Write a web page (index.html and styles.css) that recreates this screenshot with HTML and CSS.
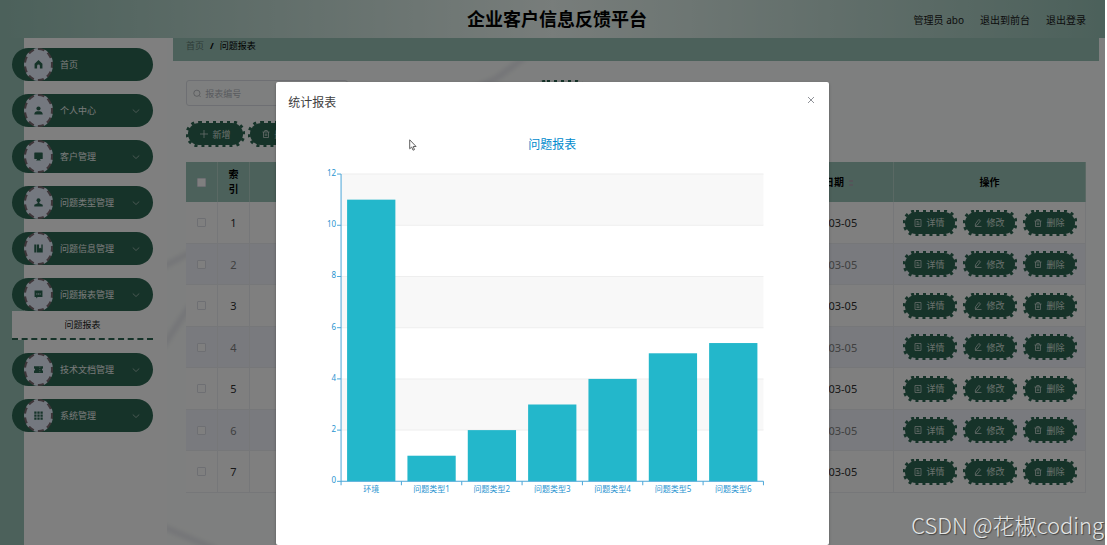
FILE: index.html
```html
<!DOCTYPE html>
<html lang="zh-CN">
<head>
<meta charset="utf-8">
<title>企业客户信息反馈平台</title>
<link rel="stylesheet" href="styles.css">
</head>
<body>
<svg class="sprite" aria-hidden="true">
  <symbol id="i-home" viewBox="0 0 16 16"><path d="M8 0 1 6.500V15h4.500v-4.500a2.500 2.500 0 0 1 5 0V15H15V6.500z"/></symbol>
  <symbol id="i-user" viewBox="0 0 16 16"><circle cx="8" cy="4.500" r="3.700"/><path d="M0.500 15c0-4 3-5.500 5-5.500h5c2 0 5 1.500 5 5.500z"/></symbol>
  <symbol id="i-screen" viewBox="0 0 16 16"><path d="M1.500 1h13a1 1 0 0 1 1 1v9.500a1 1 0 0 1-1 1H11V14h1v1.200H4V14h1v-1.500H1.500a1 1 0 0 1-1-1V2a1 1 0 0 1 1-1z"/></symbol>
  <symbol id="i-person" viewBox="0 0 16 16"><circle cx="8" cy="4" r="3.500"/><path d="M6.500 7h3v2.500l6 2.500v3H.5v-3l6-2.500z"/></symbol>
  <symbol id="i-book" viewBox="0 0 16 16"><path fill-rule="evenodd" d="M.5 1H4v14H.5zM5 1h4v7l2-1.500L13 8V1h2.500v14H5z"/></symbol>
  <symbol id="i-chat" viewBox="0 0 16 16"><path fill-rule="evenodd" d="M1 1h14v11.500H6.500L4 15v-2.500H1zM4 6v2h2V6zm3 0v2h2V6zm3 0v2h2V6z"/></symbol>
  <symbol id="i-ticket" viewBox="0 0 16 16"><path fill-rule="evenodd" d="M0 2h16v4a2 2 0 0 0 0 4v4H0v-4a2 2 0 0 0 0-4zM10 3v2h1V3zm0 4v2h1V7zm0 4v2h1v-2z"/></symbol>
  <symbol id="i-grid" viewBox="0 0 16 16"><path d="M.5 1h4v4h-4zM6 1h4v4H6zM11.500 1h4v4h-4zM.5 6.200h4v4h-4zM6 6.200h4v4H6zM11.500 6.200h4v4h-4zM.5 11.400h4v4h-4zM6 11.400h4v4H6zM11.500 11.400h4v4h-4z"/></symbol>
  <symbol id="i-down" viewBox="0 0 16 16"><path class="line" d="m1.500 5 6.500 6 6.500-6"/></symbol>
  <symbol id="i-search" viewBox="0 0 16 16"><circle class="line" cx="7.500" cy="7.500" r="6"/><path class="line" d="m12 12 3 3"/></symbol>
  <symbol id="i-plus" viewBox="0 0 16 16"><path class="line" d="M8 0v16M0 8h16"/></symbol>
  <symbol id="i-doc" viewBox="0 0 16 16"><path class="line" d="M2 1h12v14H2zM5 5h4M5 8h6M5 11h6"/></symbol>
  <symbol id="i-edit" viewBox="0 0 16 16"><path class="line" d="M3 9.500 9.500 1 13 3.500 6.500 12l-4 1.500zM2 15h13"/></symbol>
  <symbol id="i-trash" viewBox="0 0 16 16"><path class="line" d="M1 4h14M5.500 4V1h5v3M3 4v11h10V4M6.500 7v5M9.500 7v5"/></symbol>
</svg>

<div class="app">
  <header class="topbar">
    <h1 class="brand">企业客户信息反馈平台</h1>
    <nav class="account">
      <span>管理员 abo</span>
      <a href="#">退出到前台</a>
      <a href="#">退出登录</a>
    </nav>
  </header>

  <div class="layout">
    <aside class="sidebar">
      <nav class="menu">
        <a class="item" href="#"><span class="badge"><svg><use href="#i-home"/></svg></span><span class="name">首页</span></a>
        <a class="item" href="#"><span class="badge"><svg><use href="#i-user"/></svg></span><span class="name">个人中心</span><svg class="chev"><use href="#i-down"/></svg></a>
        <a class="item" href="#"><span class="badge"><svg><use href="#i-screen"/></svg></span><span class="name">客户管理</span><svg class="chev"><use href="#i-down"/></svg></a>
        <a class="item" href="#"><span class="badge"><svg><use href="#i-person"/></svg></span><span class="name">问题类型管理</span><svg class="chev"><use href="#i-down"/></svg></a>
        <a class="item" href="#"><span class="badge"><svg><use href="#i-book"/></svg></span><span class="name">问题信息管理</span><svg class="chev"><use href="#i-down"/></svg></a>
        <div class="group">
          <a class="item" href="#"><span class="badge"><svg><use href="#i-chat"/></svg></span><span class="name">问题报表管理</span><svg class="chev"><use href="#i-down"/></svg></a>
          <a class="subitem" href="#">问题报表</a>
        </div>
        <a class="item" href="#"><span class="badge"><svg><use href="#i-ticket"/></svg></span><span class="name">技术文档管理</span><svg class="chev"><use href="#i-down"/></svg></a>
        <a class="item" href="#"><span class="badge"><svg><use href="#i-grid"/></svg></span><span class="name">系统管理</span><svg class="chev"><use href="#i-down"/></svg></a>
      </nav>
    </aside>

    <main class="main">
      <svg class="marble" viewBox="0 0 938 507" preserveAspectRatio="none" aria-hidden="true">
        <path d="M-10 232 70 190 200 100 330 40 390-5"/>
        <path d="M-5 310 20 272 110 180"/>
        <path d="M-10 486 50 512"/>
      </svg>
      <div class="crumbs"><a href="#">首页</a><b>/</b><span>问题报表</span></div>
      <div class="content">
        <form class="search">
          <label class="field"><svg><use href="#i-search"/></svg><input type="text" placeholder="报表编号" aria-label="报表编号"></label>
          <button class="btn" type="button" aria-label="查询"><svg><use href="#i-search"/></svg></button>
        </form>
        <div class="tools">
          <button class="btn" type="button"><svg><use href="#i-plus"/></svg>新增</button>
          <button class="btn" type="button"><svg><use href="#i-trash"/></svg>删除</button>
        </div>
        <table class="grid">
          <colgroup><col class="c-check"><col class="c-index"><col><col class="c-date"><col class="c-act"></colgroup>
          <thead>
            <tr><th><input type="checkbox" aria-label="全选"></th><th>索引</th><th></th><th>登记日期<span class="sort"></span></th><th>操作</th></tr>
          </thead>
          <tbody id="rows"></tbody>
        </table>
      </div>
    </main>
  </div>

  <div class="mask">
    <section class="dialog" role="dialog" aria-label="统计报表">
      <header class="dialog-head">
        <h2>统计报表</h2>
        <button class="close" type="button" aria-label="关闭"><svg viewBox="0 0 8 8"><path d="m1 1 6 6M7 1 1 7"/></svg></button>
      </header>
      <svg class="chart" viewBox="0 0 552 400" role="img" aria-label="问题报表柱状图">
        <text class="chart-title" x="276" y="27">问题报表</text>
        <g id="plot"></g>
      </svg>
      <svg class="pointer" viewBox="0 0 8 12" aria-hidden="true"><path d="M.7.8v9l2-1.800 1.300 3.200 1.500-.6-1.300-3.100h2.900z"/></svg>
    </section>
  </div>
  <div class="watermark">CSDN @花椒coding</div>
</div>
<script src="app.js"></script>
</body>
</html>
```
FILE: styles.css
```css
* { box-sizing: border-box; }

body {
  margin: 0;
  padding-right: 2px;
  background: #fff;
  color: #303030;
  font-family: "Noto Sans", "Noto Sans CJK SC", sans-serif;
  font-size: 9px;
  overflow: hidden;
}

a { color: inherit; text-decoration: none; }
svg { fill: currentColor; }
.sprite { position: absolute; width: 0; height: 0; }
.line { fill: none; stroke: currentColor; stroke-width: 1.5; }

.app {
  position: relative;
  display: flex;
  flex-direction: column;
  height: 100vh;
  overflow: hidden;
}

.topbar {
  display: grid;
  grid-template-columns: 1fr auto 1fr;
  align-items: center;
  height: 38px;
  flex: none;
  padding: 0 19px;
  background: linear-gradient(90deg, #98c2b6, #f0faf6 50%, #98c2b6);
}
.brand {
  grid-column: 2;
  margin: 0;
  padding-left: 9px;
  color: #000;
  font-size: 18px;
  line-height: 24px;
}
.account {
  display: flex;
  justify-content: flex-end;
  gap: 16px;
  color: #181818;
  font-size: 10px;
}

.layout { display: flex; flex: 1; min-height: 0; }

.sidebar {
  width: 167px;
  flex: none;
  padding: 10px 14px 0 12px;
  background: linear-gradient(90deg, #98c2b6 24px, #fff 24px);
}
.menu { display: flex; flex-direction: column; gap: 13px; }
.item {
  display: flex;
  align-items: center;
  height: 33px;
  padding: 0 13px 0 12px;
  border-radius: 17px;
  background: #2c6652;
  color: #f0f4f2;
}
.badge {
  display: grid;
  place-items: center;
  width: 29px;
  height: 33px;
  margin-right: 7px;
  border: 2px dashed #7c6c72;
  border-radius: 50%;
  background: #e8f0fe;
  color: #2c6652;
}
.badge svg { width: 9px; height: 9px; }
.name { flex: 1; }
.chev { width: 8px; height: 8px; color: #b4c8c0; }
.subitem {
  display: block;
  height: 29px;
  border-bottom: 2px dashed #2c6652;
  background: #fff;
  color: #202020;
  line-height: 28px;
  text-align: center;
}

.main {
  position: relative;
  flex: 1;
  min-width: 0;
  padding: 0 6px;
  background: #fdfffe;
}
.marble {
  position: absolute;
  inset: 0;
  width: 100%;
  height: 100%;
}
.marble path {
  fill: none;
  stroke: #e9ebf0;
  stroke-width: 6;
  filter: blur(2px);
}
.crumbs {
  position: relative;
  display: flex;
  gap: 6px;
  height: 23px;
  padding: 0 13px;
  background: #98c2b6;
  color: #000;
  line-height: 15px;
}
.crumbs a { color: #5c7870; }

.content { position: relative; padding: 19px 13px 0 13px; }
.search { display: flex; gap: 186px; }
.field {
  display: flex;
  align-items: center;
  gap: 4px;
  width: 162px;
  height: 26px;
  padding: 0 6px;
  border: 1px solid #dcdfe6;
  border-radius: 3px;
  color: #a8abb2;
}
.field svg { width: 9px; height: 9px; }
.field input {
  width: 100%;
  padding: 0;
  border: 0;
  outline: 0;
  background: none;
  font: inherit;
}
.field input::placeholder { color: #b4b7be; }

.btn {
  position: relative;
  display: flex;
  align-items: center;
  justify-content: center;
  gap: 4px;
  width: 54px;
  height: 26px;
  padding: 0;
  border: 2px solid transparent;
  border-radius: 13px;
  background: #2c6652 padding-box;
  color: #d4e0dc;
  font: inherit;
}
.btn svg { width: 8px; height: 8px; flex: none; }
.btn .teeth {
  position: absolute;
  top: -2px;
  left: -2px;
  width: calc(100% + 4px);
  height: 26px;
}
.teeth rect {
  x: 1px;
  y: 1px;
  width: calc(100% - 2px);
  height: 24px;
  fill: none;
  stroke: #2c6652;
  stroke-width: 3;
  stroke-dasharray: 3 4;
}
.tools { display: flex; gap: 3px; margin: 15px 0; }
.tools .btn { width: 59px; }

.grid {
  width: 100%;
  table-layout: fixed;
  border-collapse: separate;
  border-spacing: 0;
  text-align: center;
  font-size: 11px;
}
.c-check, .c-index { width: 32px; }
.c-date { width: 130px; }
.c-act { width: 192px; }
.grid th {
  height: 40px;
  padding: 0 10px;
  border-right: 1px solid #b4d2c9;
  background: #98c2b6;
  color: #000;
  font-size: 10px;
  line-height: 15px;
}
.grid th:first-child, .grid td { padding: 0; }
.grid td {
  height: 42px;
  border-right: 1px solid #eceef2;
  border-bottom: 1px solid #eceef2;
  background: #fff;
}
.grid tbody tr:nth-child(even) td { height: 41px; background: #f2f5fc; color: #808080; }
.grid input {
  appearance: none;
  display: block;
  width: 9px;
  height: 9px;
  margin: 0 auto;
  border: 1px solid #dcdfe6;
  border-radius: 1px;
  background: #fff;
}
.sort {
  display: inline-block;
  width: 4px;
  height: 6px;
  margin-left: 5px;
  border-top: 2px solid #a8abb2;
  border-bottom: 2px solid #a8abb2;
}
.acts { display: flex; justify-content: center; gap: 6px; font-size: 9px; }

.mask {
  position: absolute;
  inset: 0;
  padding-top: 15vh;
  background: rgba(0, 0, 0, .5);
}
.dialog {
  position: relative;
  width: 50%;
  min-height: 100%;
  margin: 0 auto;
  border-radius: 2px;
  background: #fff;
  box-shadow: 0 1px 3px rgba(0, 0, 0, .3);
}
.dialog-head {
  display: flex;
  justify-content: space-between;
  align-items: center;
  height: 40px;
  padding: 0 14px 0 12px;
}
.dialog-head h2 { margin: 0; color: #404040; font-size: 12px; font-weight: 400; }
.close { padding: 0; border: 0; background: none; color: #909399; line-height: 0; }
.close svg { width: 8px; height: 8px; margin-bottom: 4px; }
.close path { stroke: currentColor; }

.chart { display: block; width: 100%; }
.chart text { fill: #2a94d0; font-size: 8px; text-anchor: middle; }
.chart .tick-y { text-anchor: end; }
.chart .chart-title { fill: #008acd; font-size: 12px; }
.band { fill: #f8f8f8; }
.rule { stroke: #eee; }
.axis { fill: none; stroke: #4ba6d8; }
.bar { fill: #23b7cb; }
.pointer {
  position: absolute;
  left: 24%;
  top: 57px;
  width: 8px;
  height: 12px;
  fill: #fff;
  stroke: #606060;
}

.watermark {
  position: absolute;
  right: 1px;
  bottom: 5px;
  color: #e4e6e5;
  font: 300 22px/32px "Noto Sans CJK SC", sans-serif;
  text-shadow: 1px 1px 1px #404040;
}
```
FILE: app.js
```js
const action = (icon, label) =>
  `<button class="btn" type="button"><svg><use href="#i-${icon}"/></svg>${label}</button>`;

document.getElementById('rows').innerHTML = [1, 2, 3, 4, 5, 6, 7].map(n => `
  <tr>
    <td><input type="checkbox" aria-label="选择第${n}行"></td>
    <td>${n}</td><td></td><td>2024-03-05</td>
    <td><div class="acts">${action('doc', '详情')}${action('edit', '修改')}${action('trash', '删除')}</div></td>
  </tr>`).join('');

document.querySelectorAll('.btn').forEach(btn => btn.insertAdjacentHTML(
  'beforeend', '<svg class="teeth" aria-hidden="true"><rect rx="12"/></svg>'));

const data = [['环境', 11], ['问题类型1', 1], ['问题类型2', 2], ['问题类型3', 3],
  ['问题类型4', 4], ['问题类型5', 5], ['问题类型6', 5.4]];
const left = 65, right = 487, top0 = 52, base = 359, max = 12;
const y = v => base - (base - top0) * v / max;
const step = (right - left) / data.length;
let out = '';
for (let v = 12; v > 0; v -= 2) {
  if (v % 4 === 0) out += `<rect class="band" x="${left}" y="${y(v)}" width="${right - left}" height="${y(v - 2) - y(v)}"/>`;
  out += `<path class="rule" d="M${left} ${y(v)}H${right}"/>`;
}
data.forEach(([name, v], i) => {
  const x = left + step * i;
  out += `<rect class="bar" x="${x + step * 0.1}" y="${y(v)}" width="${step * 0.8}" height="${base - y(v)}"/>`;
  out += `<text x="${x + step / 2}" y="${base + 11}">${name}</text>`;
  out += `<path class="axis" d="M${x + step} ${base}v4"/>`;
});
for (let v = 0; v <= max; v += 2) {
  out += `<path class="axis" d="M${left} ${y(v)}h-4"/><text class="tick-y" x="${left - 5}" y="${y(v) + 2}">${v}</text>`;
}
out += `<path class="axis" d="M${left} ${top0}V${base + 4}M${left} ${base}H${right}"/>`;
document.getElementById('plot').innerHTML = out;
```
